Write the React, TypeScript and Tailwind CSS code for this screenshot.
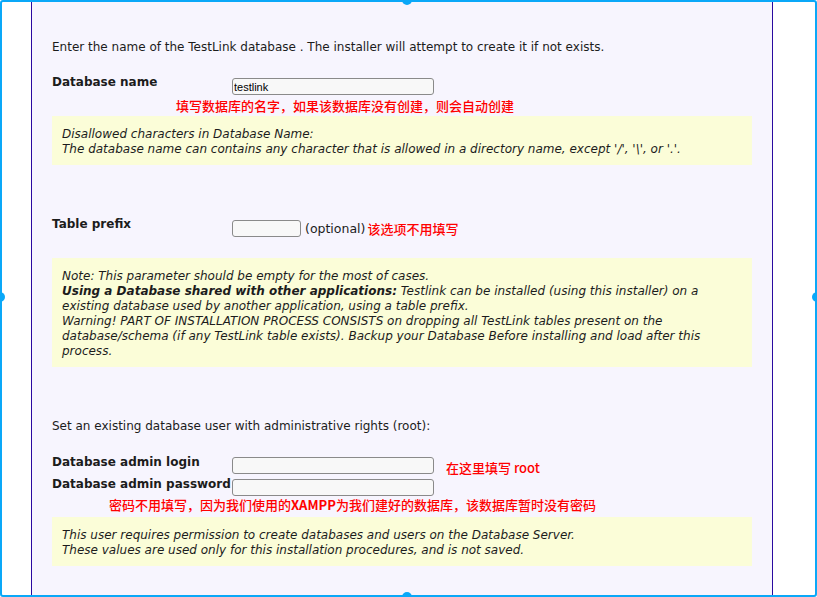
import React from "react";

const Field = ({ value = "", width }: { value?: string; width: string }) => (
  <input
    type="text"
    defaultValue={value}
    className={`${width} h-[17px] rounded-[3px] border border-[#8a8a8a] bg-[#f8f8f8] px-[1px] text-[11px] leading-[15px] text-black outline-none`}
    style={{ fontFamily: '"Liberation Sans", Arial, sans-serif' }}
  />
);

const Note = ({ children, mt }: { children: React.ReactNode; mt: string }) => (
  <div className={`${mt} w-[700px] bg-[#fbfdd8] pl-[10px] pr-[20px] pt-[11px] pb-[8px] italic leading-[15px] text-[#1c1c1c]`}>
    {children}
  </div>
);

const cjk = '"Noto Sans CJK SC", "DejaVu Sans", sans-serif';

export default function App() {
  return (
    <div className="relative h-[597px] w-[817px] overflow-hidden rounded-[3px] border-2 border-[#0aa8f8] bg-white">
      <div
        className="ml-[29px] h-full w-[742px] border-x border-[#2a0aa0] bg-[#f7f5fe] px-[20px] pt-[38px] text-[12px] leading-[15px] text-[#1c1c1c]"
        style={{ fontFamily: '"DejaVu Sans", Verdana, sans-serif' }}
      >
        <p className="h-[15px]">
          Enter the name of the TestLink database . The installer will attempt to create it if not exists.
        </p>

        <div className="mt-[20px] flex items-start">
          <div className="w-[180px] shrink-0 font-bold">Database name</div>
          <div className="mt-[3px]">
            <Field value="testlink" width="w-[202px]" />
          </div>
        </div>
        <div className="ml-[124px] mt-[3px] text-[13px] font-medium leading-[16px] text-[#ff0000]" style={{ fontFamily: cjk }}>
          填写数据库的名字，如果该数据库没有创建，则会自动创建
        </div>

        <Note mt="mt-[2px]">
          Disallowed characters in Database Name:
          <br />
          The database name can contains any character that is allowed in a directory name, except '/', '\', or '.'.
        </Note>

        <div className="mt-[52px] flex items-start">
          <div className="w-[180px] shrink-0 font-bold">Table prefix</div>
          <div className="mt-[3px] flex items-center">
            <Field width="w-[69px]" />
            <span className="ml-[4px] text-[12.5px] leading-[15px]">(optional)</span>
            <span className="ml-[2px] text-[13px] font-medium leading-[15px] text-[#ff0000]" style={{ fontFamily: cjk }}>
              该选项不用填写
            </span>
          </div>
        </div>

        <Note mt="mt-[21px]">
          Note: This parameter should be empty for the most of cases.
          <br />
          <b>Using a Database shared with other applications:</b> Testlink can be installed (using this installer) on a
          existing database used by another application, using a table prefix.
          <br />
          Warning! PART OF INSTALLATION PROCESS CONSISTS on dropping all TestLink tables present on the
          database/schema (if any TestLink table exists). Backup your Database Before installing and load after this
          process.
        </Note>

        <p className="mt-[52px] h-[15px]">Set an existing database user with administrative rights (root):</p>

        <div className="mt-[21px] flex items-start">
          <div className="w-[180px] shrink-0 font-bold">Database admin login</div>
          <div className="mt-[2px] flex h-[17px] items-center">
            <Field width="w-[202px]" />
            <span className="ml-[12px] mt-[3px] text-[13px] font-medium leading-[15px] text-[#ff0000]" style={{ fontFamily: cjk }}>
              在这里填写 root
            </span>
          </div>
        </div>
        <div className="mt-[3px] flex items-start">
          <div className="w-[180px] shrink-0 whitespace-nowrap font-bold">Database admin password</div>
          <div className="mt-[2px]">
            <Field width="w-[202px]" />
          </div>
        </div>
        <div className="ml-[57px] mt-[1px] text-[13px] font-medium leading-[16px] text-[#ff0000]" style={{ fontFamily: cjk }}>
          密码不用填写，因为我们使用的<b>XAMPP</b>为我们建好的数据库，该数据库暂时没有密码
        </div>

        <Note mt="mt-[4px]">
          This user requires permission to create databases and users on the Database Server.
          <br />
          These values are used only for this installation procedures, and is not saved.
        </Note>
      </div>

      {/* selection handles */}
      <span className="absolute left-[400px] top-[-7px] h-[10px] w-[10px] rounded-full bg-[#0aa8f8]" />
      <span className="absolute bottom-[-7px] left-[400px] h-[10px] w-[10px] rounded-full bg-[#0aa8f8]" />
      <span className="absolute left-[-7px] top-[290px] h-[10px] w-[10px] rounded-full bg-[#0aa8f8]" />
      <span className="absolute right-[-7px] top-[290px] h-[10px] w-[10px] rounded-full bg-[#0aa8f8]" />
    </div>
  );
}
